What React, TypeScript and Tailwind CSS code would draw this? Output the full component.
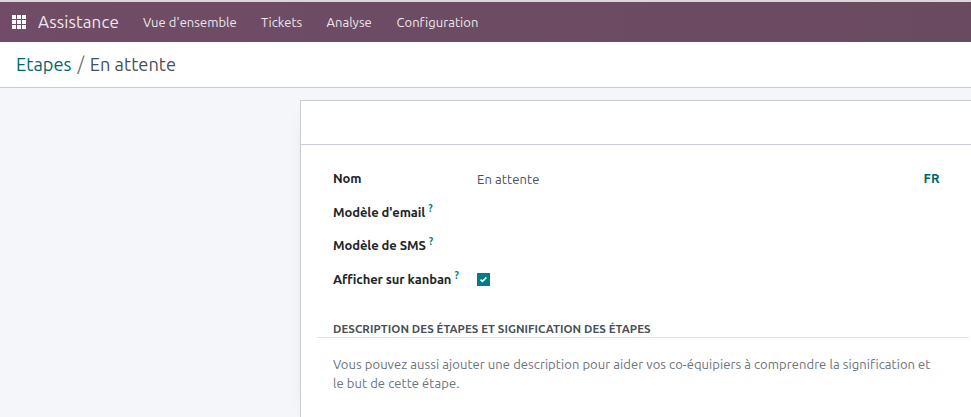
import React from 'react';

const menu = [
  { label: "Vue d'ensemble", style: 'w-[118px]' },
  { label: 'Tickets', style: 'w-[65.5px]' },
  { label: 'Analyse', style: 'w-[70px]' },
  { label: 'Configuration', style: '' },
];

function AppsIcon() {
  return (
    <svg width="14" height="14" viewBox="0 0 14 14" fill="#fff" shapeRendering="crispEdges">
      {[0, 5, 10].map((y) => [0, 5, 10].map((x) => <rect key={`${x}-${y}`} x={x} y={y} width="4" height="4" />))}
    </svg>
  );
}

function Field({ label, help, children }: { label: string; help?: boolean; children?: React.ReactNode }) {
  return (
    <div className="flex h-[33.6px] items-center">
      <div className="flex w-36 shrink-0 items-center whitespace-nowrap font-semibold tracking-[-0.09px] text-[#212529]">
        <span>{label}</span>
        {help && <sup className="-top-[3.5px] ml-[3px] text-[10px] font-semibold leading-none text-[#017e84]">?</sup>}
      </div>
      {children}
    </div>
  );
}

export default function App() {
  return (
    <div className="flex h-[417px] w-[971px] flex-col overflow-hidden bg-[#f5f6fa] font-['Ubuntu','Noto_Sans',sans-serif] text-[13px] leading-[19.5px] tracking-[0.04px] text-[#495057]">
      <header className="flex h-[42px] shrink-0 items-center border-t-2 border-[#d9d7d9] bg-gradient-to-r from-[#714b67] to-[#694b60] pl-3 text-[#ece7eb]">
        <AppsIcon />
        <span className="ml-3 w-[105px] whitespace-nowrap text-[17px] tracking-[0.1px]">Assistance</span>
        <nav className="flex whitespace-nowrap pt-0.5">
          {menu.map((m) => (
            <a key={m.label} className={m.style}>{m.label}</a>
          ))}
        </nav>
      </header>
      <div className="flex h-[46px] shrink-0 items-center border-b border-[#c9ccd2] bg-white pl-4 text-[18.2px]">
        <span className="text-[#01666b]">Etapes</span>
        <span className="pl-[6px] pr-[5.5px] text-[#6c757d]">/</span>
        <span>En attente</span>
      </div>
      <main className="flex min-h-0 grow pl-[300px] pt-3">
        <section className="grow border-l border-t border-[#c9ccd6] bg-white shadow-[0_5px_20px_-15px_rgba(0,0,0,0.4)]">
          <div className="h-11 border-b border-[#c9ccd6]" />
          <div className="pl-4 pt-[17px]">
            <div className="pl-4">
              <Field label="Nom">
                <span className="pt-0.5 tracking-[0.1px]">En attente</span>
                <span className="ml-auto mr-[31.5px] font-semibold text-[#01666b]">FR</span>
              </Field>
              <Field label="Modèle d'email" help />
              <Field label="Modèle de SMS" help />
              <Field label="Afficher sur kanban" help>
                <span className="flex size-[13px] items-center justify-center bg-[#017e84]">
                  <svg width="7" height="7" viewBox="0 0 7 7" fill="none" stroke="#fff" strokeWidth="1.6"><path d="M.5 3.6 2.5 5.4 6.5 1.4" /></svg>
                </span>
              </Field>
            </div>
            <h2 className="mt-[23px] mr-[2px] h-[19px] border-b border-[#dee2e6] pl-4 text-[11.5px] font-bold leading-[19px] tracking-[0.05px] text-[#495057]"><span>DESCRIPTION DES ÉTAPES ET SIGNIFICATION DES ÉTAPES</span></h2>
            <p className="mt-[17px] whitespace-nowrap pl-4 leading-[19px] tracking-[0.07px] text-[#6c7379]"><span>Vous pouvez aussi ajouter une description pour aider vos co-équipiers à comprendre la signification et</span><br /><span>le but de cette étape.</span></p>
          </div>
        </section>
      </main>
    </div>
  );
}
